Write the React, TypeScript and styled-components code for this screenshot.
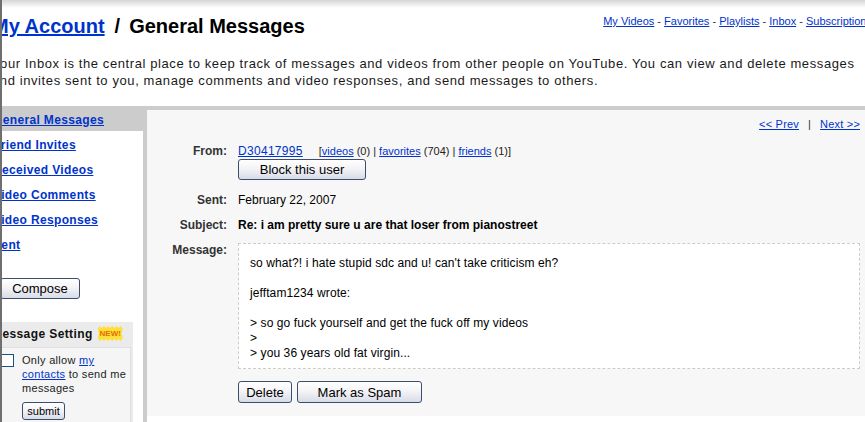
import styled, { createGlobalStyle } from "styled-components";

const font = `"Liberation Sans", Arial, Helvetica, sans-serif`;

const GlobalStyle = createGlobalStyle`
  html, body {
    margin: 0;
    padding: 0;
    background: #fff;
  }
  body {
    font-family: ${font};
    color: #000;
  }
`;

const Frame = styled.div`
  width: 865px;
  height: 422px;
  overflow: hidden;
  box-sizing: border-box;
  border-left: 2px solid #6f6f6f;
  background: #fff;
`;

const Page = styled.div`
  width: 880px;
  margin-left: -10px;
`;

const Header = styled.div`
  height: 106px;
  box-sizing: border-box;
  padding-top: 14px;
  background: linear-gradient(#d6d6d6 0px, #fff 8px);
`;

const TitleRow = styled.div`
  display: flex;
  align-items: flex-start;
`;

const Title = styled.h1`
  margin: 0;
  font-size: 20px;
  line-height: 24px;
  font-weight: bold;
  color: #000;
`;

const TitleLink = styled.a`
  color: #03c;
  text-decoration: underline;
`;

const Slash = styled.span`
  margin: 0 9px 0 10px;
`;

const TopNav = styled.div`
  margin-left: auto;
  padding-top: 1px;
  font-size: 11px;
  line-height: 13px;
  color: #333;
  white-space: nowrap;
`;

const SmallLink = styled.a`
  color: #03c;
  text-decoration: underline;
`;

const Intro = styled.p`
  margin: 17px 0 0;
  font-size: 13px;
  line-height: 17px;
  letter-spacing: 0.6px;
  white-space: nowrap;
  color: #1a1a1a;
`;

const Body = styled.div`
  display: flex;
  border-top: 4px solid #ccc;
`;

const Sidebar = styled.div`
  flex: none;
  width: 151px;
`;

const NavList = styled.div`
  display: flex;
  flex-direction: column;
  gap: 4px;
`;

const NavItem = styled.div<{ $active?: boolean }>`
  height: 21px;
  line-height: 21px;
  padding-left: 1px;
  font-size: 12px;
  font-weight: bold;
  letter-spacing: 0.35px;
  background: ${(p) => (p.$active ? "#ccc" : "transparent")};

  a {
    color: #03c;
    text-decoration: underline;
  }
`;

const Button = styled.button<{ $w: number; $h?: number; $size?: number }>`
  width: ${(p) => p.$w}px;
  height: ${(p) => p.$h ?? 22}px;
  padding: 0;
  font-family: ${font};
  font-size: ${(p) => p.$size ?? 13}px;
  color: #000;
  border: 1px solid #3d4e6c;
  border-radius: 3px;
  background: linear-gradient(#ffffff 0%, #f4f4f7 45%, #d8dce7 100%);
  cursor: pointer;
`;

const ComposeWrap = styled.div`
  margin: 22px 0 0 8px;
`;

const SettingBox = styled.div`
  margin-top: 23px;
  width: 141px;
  background: #ebebeb;
  padding-bottom: 2px;
`;

const SettingHead = styled.div`
  display: flex;
  align-items: center;
  height: 23px;
  font-size: 12px;
  font-weight: bold;
  letter-spacing: 0.4px;
  color: #111;
`;

const NewBadge = styled.span`
  margin-left: 5px;
  width: 25px;
  height: 15px;
  display: flex;
  align-items: center;
  justify-content: center;
  font-size: 8px;
  font-weight: bold;
  letter-spacing: 0;
  color: #e36f00;
  background: #ffdf3a;
  clip-path: polygon(0% 20%, 8% 0%, 16% 14%, 25% 0%, 33% 14%, 42% 0%, 50% 14%, 58% 0%, 67% 14%, 75% 0%, 84% 14%, 92% 0%, 100% 20%, 95% 50%, 100% 80%, 92% 100%, 84% 86%, 75% 100%, 67% 86%, 58% 100%, 50% 86%, 42% 100%, 33% 86%, 25% 100%, 16% 86%, 8% 100%, 0% 80%, 5% 50%);
`;

const SettingBody = styled.div`
  margin: 2px 2px 0 0;
  padding: 5px 0 6px 8px;
  background: #f5f5f5;
  border: 1px solid #e0e0e0;
`;

const OptionRow = styled.div`
  display: flex;
  align-items: flex-start;
  gap: 8px;
`;

const Check = styled.input`
  appearance: none;
  flex: none;
  width: 13px;
  height: 13px;
  margin: 1px 0 0;
  border: 1px solid #1c5180;
  background: #fff;
`;

const OptionText = styled.div`
  width: 110px;
  font-size: 11px;
  line-height: 14px;
  letter-spacing: 0.3px;
  color: #222;
`;

const SubmitWrap = styled.div`
  margin-top: 6px;
`;

const Main = styled.div`
  flex: 1;
  border-left: 4px solid #ccc;
`;

const Panel = styled.div`
  background: #f7f7f7;
  padding: 8px 12px 13px 0;
`;

const Pager = styled.div`
  text-align: right;
  font-size: 11px;
  line-height: 13px;
  letter-spacing: 0.2px;
  color: #333;
`;

const Bar = styled.span`
  margin: 0 9px;
`;

const Fields = styled.div`
  margin-top: 13px;
  display: grid;
  grid-template-columns: 80px 1fr;
  column-gap: 11px;
  row-gap: 10px;
`;

const Label = styled.div`
  text-align: right;
  font-size: 12px;
  line-height: 15px;
  font-weight: bold;
  color: #333;
`;

const Value = styled.div<{ $bold?: boolean }>`
  font-size: 12px;
  line-height: 15px;
  font-weight: ${(p) => (p.$bold ? "bold" : "normal")};
  color: #000;
`;

const UserLink = styled.a`
  color: #03c;
  text-decoration: underline;
  letter-spacing: 0.3px;
`;

const UserStats = styled.span`
  margin-left: 16px;
  font-size: 11px;
  color: #222;
`;

const BlockWrap = styled.div`
  margin-bottom: 3px;
`;

const MessageBox = styled.div`
  padding: 12px 11px 7px;
  background: #fff;
  border: 1px dashed #ccc;
  font-size: 12px;
  line-height: 15px;
  letter-spacing: 0.1px;
  color: #000;
  white-space: pre-line;
`;

const Actions = styled.div`
  display: flex;
  gap: 5px;
  margin-top: 12px;
`;

const navLinks = ["My Videos", "Favorites", "Playlists", "Inbox", "Subscriptions"];

const folders = [
  "General Messages",
  "Friend Invites",
  "Received Videos",
  "Video Comments",
  "Video Responses",
  "Sent",
];

const message = `so what?! i hate stupid sdc and u! can't take criticism eh?

jefftam1234 wrote:

> so go fuck yourself and get the fuck off my videos
>
> you 36 years old fat virgin...`;

export default function App() {
  return (
    <>
      <GlobalStyle />
      <Frame>
        <Page>
          <Header>
            <TitleRow>
              <Title>
                <TitleLink href="#">My Account</TitleLink>
                <Slash>/</Slash>General Messages
              </Title>
              <TopNav>
                {navLinks.map((l, i) => (
                  <span key={l}>
                    {i > 0 && " - "}
                    <SmallLink href="#">{l}</SmallLink>
                  </span>
                ))}
              </TopNav>
            </TitleRow>
            <Intro>
              Your Inbox is the central place to keep track of messages and videos from other people on YouTube. You can view and delete messages
              <br />
              and invites sent to you, manage comments and video responses, and send messages to others.
            </Intro>
          </Header>

          <Body>
            <Sidebar>
              <NavList>
                {folders.map((f, i) => (
                  <NavItem key={f} $active={i === 0}>
                    <a href="#">{f}</a>
                  </NavItem>
                ))}
              </NavList>
              <ComposeWrap>
                <Button $w={80} $h={21}>Compose</Button>
              </ComposeWrap>
              <SettingBox>
                <SettingHead>
                  Message Setting
                  <NewBadge>NEW!</NewBadge>
                </SettingHead>
                <SettingBody>
                  <OptionRow>
                    <Check type="checkbox" />
                    <div>
                      <OptionText>
                        Only allow <SmallLink href="#">my contacts</SmallLink> to send me messages
                      </OptionText>
                      <SubmitWrap>
                        <Button $w={43} $h={18} $size={11}>submit</Button>
                      </SubmitWrap>
                    </div>
                  </OptionRow>
                </SettingBody>
              </SettingBox>
            </Sidebar>

            <Main>
              <Panel>
                <Pager>
                  <SmallLink href="#">&lt;&lt; Prev</SmallLink>
                  <Bar>|</Bar>
                  <SmallLink href="#">Next &gt;&gt;</SmallLink>
                </Pager>
                <Fields>
                  <Label>From:</Label>
                  <Value>
                    <UserLink href="#">D30417995</UserLink>
                    <UserStats>
                      [<SmallLink href="#">videos</SmallLink> (0) | <SmallLink href="#">favorites</SmallLink> (704) |{" "}
                      <SmallLink href="#">friends</SmallLink> (1)]
                    </UserStats>
                    <BlockWrap>
                      <Button $w={128} $h={21}>Block this user</Button>
                    </BlockWrap>
                  </Value>

                  <Label>Sent:</Label>
                  <Value>February 22, 2007</Value>

                  <Label>Subject:</Label>
                  <Value $bold>Re: i am pretty sure u are that loser from pianostreet</Value>

                  <Label>Message:</Label>
                  <Value>
                    <MessageBox>{message}</MessageBox>
                    <Actions>
                      <Button $w={54}>Delete</Button>
                      <Button $w={125}>Mark as Spam</Button>
                    </Actions>
                  </Value>
                </Fields>
              </Panel>
            </Main>
          </Body>
        </Page>
      </Frame>
    </>
  );
}
